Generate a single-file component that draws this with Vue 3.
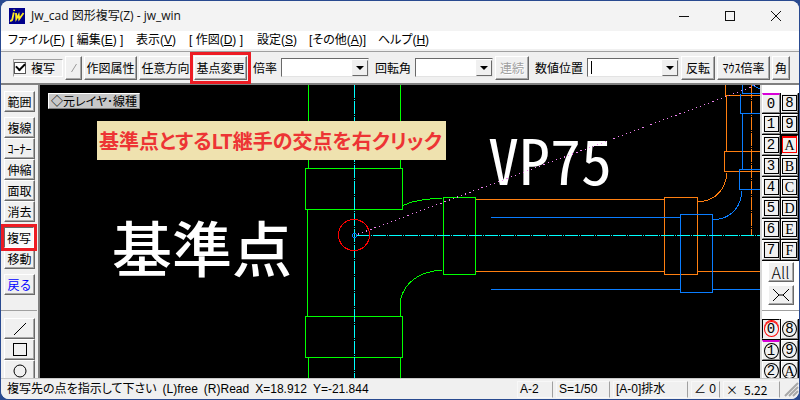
<script setup>
import { ref } from 'vue'

const menus = [
  { pre: 'ファイル(', key: 'F', post: ')', cls: 'm-file' },
  { pre: '[ 編集(', key: 'E', post: ') ]', cls: 'm-edit' },
  { pre: '表示(', key: 'V', post: ')', cls: 'm-view' },
  { pre: '[ 作図(', key: 'D', post: ') ]', cls: 'm-draw' },
  { pre: '設定(', key: 'S', post: ')', cls: 'm-set' },
  { pre: '[その他(', key: 'A', post: ')]', cls: 'm-etc' },
  { pre: 'ヘルプ(', key: 'H', post: ')', cls: 'm-help' }
]
const editTools = ['複線', 'ｺｰﾅｰ', '伸縮', '面取', '消去']
const layers = ['0', '8', '1', '9', '2', 'A', '3', 'B', '4', 'C', '5', 'D', '6', 'E', '7', 'F']
const groups = ['0', '8', '1', '9', '2', 'A']
const copyMode = ref(true)
const scale = ref('')
const angle = ref('')
const position = ref('')
</script>

<template>
  <div class="window">
    <header class="titlebar">
      <svg class="logo" width="16" height="16" viewBox="0 0 16 16" aria-hidden="true">
        <rect width="16" height="16" fill="#00008b" />
        <path d="M4.8 4.500 3.400 11q-.4 2.200-2.400 1.600M5.300 1.600 5 3M7 5l.3 6 2.400-4.200.5 4.200L14.500 5" fill="none" stroke="#ffee20" stroke-width="1.800" />
      </svg>
      <h1>Jw_cad 図形複写(Z) - jw_win</h1>
      <div class="winbuttons">
        <button aria-label="最小化"><svg width="12" height="12"><path d="M1 6.500h10" /></svg></button>
        <button aria-label="最大化"><svg width="12" height="12"><rect x="1.500" y="1.500" width="9" height="9" /></svg></button>
        <button aria-label="閉じる"><svg width="12" height="12"><path d="M1 1l10 10M11 1L1 11" /></svg></button>
      </div>
    </header>

    <nav class="menubar">
      <button v-for="m in menus" :key="m.key" :class="m.cls">{{ m.pre }}<u>{{ m.key }}</u>{{ m.post }}</button>
    </nav>

    <div class="toolbar">
      <label class="check"><input v-model="copyMode" type="checkbox" /><span>複写</span></label>
      <button class="btn slash dim" aria-label="線">
        <svg width="8" height="12"><path d="M1.500 10L6.500 2" stroke="#999" fill="none" /></svg>
      </button>
      <button class="btn w4">作図属性</button>
      <button class="btn w4">任意方向</button>
      <button class="btn w4 marked">基点変更</button>
      <label class="cap" for="scale">倍率</label>
      <div class="combo c1"><input id="scale" v-model="scale" type="text" /><button aria-label="倍率の一覧"></button></div>
      <label class="cap" for="angle">回転角</label>
      <div class="combo c2"><input id="angle" v-model="angle" type="text" /><button aria-label="回転角の一覧"></button></div>
      <button class="btn w2 dim" disabled>連続</button>
      <label class="cap" for="position">数値位置</label>
      <div class="combo c3"><i class="caret"></i><input id="position" v-model="position" type="text" /><button aria-label="数値位置の一覧"></button></div>
      <button class="btn w2">反転</button>
      <button class="btn w4">ﾏｳｽ倍率</button>
      <button class="btn w1">角</button>
    </div>

    <main class="body">
      <aside class="left">
        <button class="btn">範囲</button>
        <div class="stack">
          <button v-for="t in editTools" :key="t" class="btn">{{ t }}</button>
        </div>
        <div class="stack">
          <button class="btn marked pressed">複写</button>
          <button class="btn">移動</button>
        </div>
        <button class="btn back">戻る</button>
        <hr />
        <div class="stack">
          <button class="btn" aria-label="線"><svg width="14" height="14"><path d="M1 13L13 1" /></svg></button>
          <button class="btn" aria-label="矩形"><svg width="14" height="14"><rect x="0.500" y="0.500" width="13" height="12" /></svg></button>
          <button class="btn" aria-label="円"><svg width="14" height="14"><circle cx="7" cy="7" r="6" /></svg></button>
        </div>
      </aside>

      <section class="canvas">
        <svg class="drawing" width="100%" height="100%">
          <g transform="translate(-40 -85)">
            <g class="title">
              <text x="112" y="272" class="jp">基準点</text>
              <text x="488" y="185" class="en">VP75</text>
            </g>
            <g stroke="#ff7f10">
              <path d="M476 199.500H664M476 271.500H664M698 271.500H760" />
              <rect x="664.500" y="197.500" width="33" height="77" />
              <path d="M697 201.500h4C716 200 726.500 188 726.500 173" />
              <path d="M725.500 85V95.500H760M726.500 95V151M760 151.500H724.500V171.500H760" />
              <path d="M751.500 85V236" stroke-dasharray="13 1 1 1" />
            </g>
            <g stroke="#0a7dff">
              <path d="M491 217.500H680M491 289.500H680M713 289.500H760" />
              <rect x="680.500" y="214.500" width="32" height="78" rx="1" />
              <path d="M712 219.500h4C731 218 741.500 207 741.500 191" />
              <path d="M742.500 85V93.500M760 93.500H742M740.500 94V113.500H760M742.500 114V169M760 169.500H739.500V189.500H760M752 85L760 89" />
            </g>
            <g stroke="#00ff00">
              <path d="M308.500 85V168M400.500 85V168M307.500 210V316M308.500 358V400M400.500 358V400" />
              <rect x="305.500" y="168.500" width="97" height="41" />
              <rect x="305.500" y="316.500" width="97" height="41" />
              <rect x="443.500" y="197.500" width="32" height="77" />
              <path d="M403 205.500C412 201 428 198.500 442 198.500M400.500 316V300C404 283 420 270.500 442 270.500" />
            </g>
            <g stroke="#00ffff" stroke-dasharray="13 1 1 1">
              <path d="M354.500 85V400" />
              <path d="M357 235.500H760" />
            </g>
            <circle cx="354" cy="235" r="15.500" stroke="#ff0000" />
            <circle cx="354.500" cy="235.500" r="2" stroke="#0a7dff" />
            <path d="M358 234.200L757 85" stroke="#ee82ee" stroke-dasharray="1.200 3.200" />
          </g>
        </svg>
        <button class="layerbtn">◇元レイヤ･線種</button>
        <p class="note">基準点とするLT継手の交点を右クリック</p>
      </section>

      <aside class="right">
        <div class="grid">
          <button v-for="(n, i) in layers" :key="n" class="cell" :class="{ first: i === 0, active: n === 'A' }">
            <span class="box" :class="{ serif: n > '9' }">{{ n }}</span>
          </button>
        </div>
        <div class="wide">
          <button class="btn all">All</button>
          <button class="btn" aria-label="全レイヤ切替"><svg width="18" height="14"><path d="M1 1l6 6-6 6M17 1l-6 6 6 6M7 7h4" /></svg></button>
        </div>
        <hr />
        <div class="grid round">
          <button v-for="(n, i) in groups" :key="n" class="cell" :class="{ active: i === 0, second: i === 2 }">
            <span class="box" :class="{ serif: n > '9' }">{{ n }}</span>
          </button>
        </div>
      </aside>
    </main>

    <footer class="status">
      <div class="message">
        <span>複写先の点を指示して下さい</span><span>(L)free</span><span>(R)Read</span><span>X=18.912</span><span>Y=-21.844</span>
      </div>
      <button class="f1">A-2</button>
      <button class="f2">S=1/50</button>
      <button class="f3">[A-0]排水</button>
      <button class="f4">∠ 0</button>
      <button class="f5"><span>×</span><span>5.22</span></button>
      <svg class="grip" width="16" height="16"><path d="M2 15L15 2M6 15l9-9M10 15l5-5" stroke="#a8a8a8" stroke-width="2" fill="none" /></svg>
    </footer>
  </div>
</template>

<style>
body { background: #294a90; }
</style>

<style scoped>
* { box-sizing: border-box; }
.window {
  display: flex;
  flex-direction: column;
  height: calc(100vh - 2px);
  margin: 1px;
  border-radius: 8px;
  overflow: hidden;
  background: #f0f0f0;
  color: #000;
  font: 12px/16px "Noto Sans CJK JP", sans-serif;
}
button, input { font: inherit; color: inherit; margin: 0; padding: 0; border: 0; background: none; white-space: nowrap; }
hr { border: 0; border-top: 1px solid #a0a0a0; margin: 0; }
svg { display: block; }

.titlebar { display: flex; align-items: center; height: 30px; padding-left: 8px; gap: 6px; background: #f3f3f3; flex: none; }
.titlebar h1 { flex: 1; margin: 0; font: 12px/16px "Open Sans", "Noto Sans CJK JP", sans-serif; color: #111; }
.winbuttons { display: flex; }
.winbuttons button { width: 46px; height: 30px; display: grid; place-items: center; }
.winbuttons svg { fill: none; stroke: #111; }

.menubar { display: flex; height: 20px; flex: none; background: #fff; border-bottom: 2px solid #f0f0f0; padding-left: 7px; font-family: "Liberation Sans", "Noto Sans CJK JP", sans-serif; font-feature-settings: "palt"; }
.menubar button { text-align: left; flex: none; }
.menubar u { text-underline-offset: 1px; }
.m-file { width: 62px; }
.m-edit { width: 66px; }
.m-view { width: 53px; }
.m-draw { width: 68px; }
.m-set { width: 52px; }
.m-etc { width: 69px; }

.toolbar { display: flex; align-items: center; height: 34px; flex: none; border-top: 1px solid #a0a0a0; border-bottom: 2px solid #808080; padding-left: 12px; gap: 2px; background: #f0f0f0; }
.btn { border: 1px solid; border-color: #fff #696969 #696969 #fff; box-shadow: inset -1px -1px #a8a8a8; background: #f0f0f0; height: 24px; flex: none; text-align: center; display: grid; place-items: center; }
.dim { color: #a0a0a0; text-shadow: 1px 1px #fff; }
.slash { width: 17px; }
.w1 { width: 18px; }
.w2 { width: 34px; }
.w4 { width: 53px; }
.marked { outline: 3px solid #ed1c24; position: relative; }
.toolbar .marked { outline-offset: 1px; }
.check { display: flex; align-items: center; gap: 5px; width: 50px; height: 18px; border: 1px solid; border-color: #a0a0a0 #fff #fff #a0a0a0; flex: none; }
.check input { appearance: none; width: 12px; height: 12px; flex: none; background: #fff; border: 1px solid #555; display: grid; place-items: center; }
.check input:checked::before { content: ""; width: 7px; height: 4px; border: solid #000; border-width: 0 0 2px 2px; rotate: -45deg; margin-bottom: 3px; }
.cap { flex: none; margin: 0 2px 0 4px; }
.combo { display: flex; align-items: center; height: 19px; background: #fff; border: 1px solid; border-color: #696969 #e3e3e3 #e3e3e3 #696969; flex: none; }
.combo input { min-width: 0; flex: 1; outline: 0; }
.combo button { width: 16px; height: 16px; border: 1px solid; border-color: #f0f0f0 #696969 #696969 #f0f0f0; background: #f0f0f0; display: grid; place-items: center; flex: none; }
.combo button::before { content: ""; border: 4px solid transparent; border-top-color: #000; border-bottom: 0; }
.c1 { width: 88px; }
.c2 { width: 78px; }
.c3 { width: 92px; }
.caret { width: 1px; height: 13px; background: #000; margin-left: 3px; }

.body { display: flex; flex: 1; min-height: 0; }
.left { width: 39px; flex: none; overflow: hidden; padding: 6px 4px 0 3px; border-right: 2px solid #808080; display: flex; flex-direction: column; gap: 5px; }
.left .btn { width: 31px; height: 21px; }
.left .btn svg { fill: none; stroke: #000; }
.left .pressed { width: 30px; border-color: #696969 #fff #fff #696969; box-shadow: none; background: #fafafa; }
.left .back { color: #0000ff; }
.left hr { margin: 10px -3px 2px; flex: none; }
.stack { flex: none; }

.canvas { position: relative; flex: 1; min-width: 0; background: #000; overflow: hidden; }
.drawing { position: absolute; inset: 0; fill: none; shape-rendering: crispEdges; }
.title { fill: #fff; font-family: "Noto Sans CJK JP", sans-serif; }
.jp { font-size: 60px; font-weight: 500; }
.en { font-size: 62px; font-feature-settings: "hwid"; }
.layerbtn { position: absolute; left: 8px; top: 8px; height: 16px; padding: 0 2px; background: #c8c8c8; border: 1px solid; border-color: #fff #808080 #808080 #fff; line-height: 14px; font-feature-settings: "palt"; }
.note { position: absolute; left: 57px; top: 36px; margin: 0; padding: 0 4px 0 2px; background: #efe2af; color: #ed3434; font-size: 20px; font-weight: 700; line-height: 39px; white-space: nowrap; font-feature-settings: "palt"; }

.right { width: 39px; flex: none; overflow: hidden; background: #fff; border-left: 2px solid #d8d8d8; padding-top: 8px; }
.grid { display: grid; grid-template-columns: 18px 17px; grid-auto-rows: 20px; gap: 1px; background: #000; padding-bottom: 1px; }
.cell { display: grid; place-items: center; background: #f0f0f0; border: 1px solid; border-color: #fff #808080 #808080 #fff; }
.box { width: 15px; height: 16px; border: 1px solid #000; font: 14px/15px "Liberation Mono", monospace; text-align: center; }
.box.serif { font-family: "Liberation Serif", serif; }
.round .box { border-radius: 50%; }
.first { border-top: 2px solid #d800d8; }
.first .box { border-color: transparent; }
.second { border-top: 2px solid #d800d8; }
.active { border-color: #000 #f0f0f0 #f0f0f0 #000; }
.active .box { border-color: #ff0000; box-shadow: 0 -1px #ff0000; }
.wide { display: grid; justify-content: center; gap: 3px; padding-top: 1px; }
.wide .btn { width: 26px; height: 20px; }
.wide svg { fill: none; stroke: #000; }
.wide .all { font: 16px/18px "Noto Sans CJK JP", sans-serif; font-weight: 300; }
.right hr { margin: 5px 0 8px; }

.status { display: flex; align-items: center; height: 21px; flex: none; border-top: 1px solid #c8c8c8; background: #f0f0f0; gap: 3px; font-family: "Liberation Sans", "Noto Sans CJK JP", sans-serif; }
.message { flex: 1; min-width: 0; display: flex; gap: 6px; padding-left: 6px; overflow: hidden; white-space: nowrap; font-feature-settings: "palt"; }
.status button { height: 17px; line-height: 15px; border: 1px solid; border-color: #f8f8f8 #a0a0a0 #f8f8f8 #f8f8f8; text-align: left; padding-left: 2px; flex: none; }
.f1 { width: 36px; }
.f2 { width: 54px; }
.f3 { width: 75px; }
.f4 { width: 29px; }
.f5 { width: 57px; display: flex; gap: 6px; font-family: "Noto Sans CJK JP", sans-serif; }
.grip { flex: none; }
</style>
